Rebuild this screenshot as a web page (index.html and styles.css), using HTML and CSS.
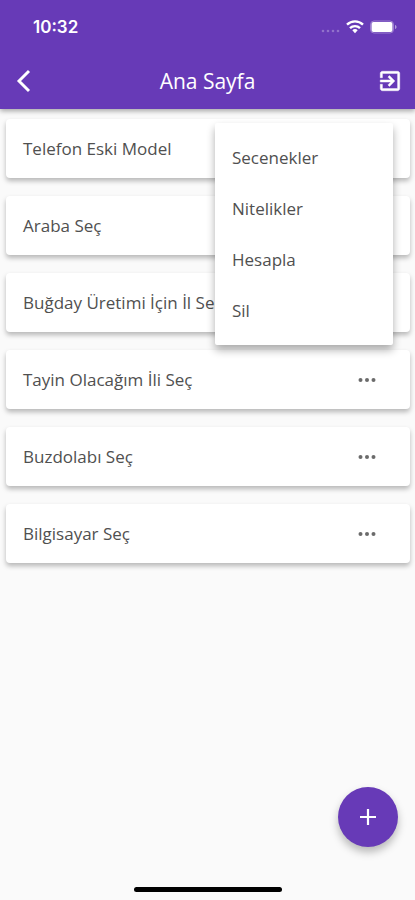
FILE: index.html
```html
<!DOCTYPE html>
<html lang="tr">
<head>
<meta charset="utf-8">
<meta name="viewport" content="width=device-width, initial-scale=1">
<title>Ana Sayfa</title>
<link rel="stylesheet" href="styles.css">
</head>
<body>
<header class="header">
  <div class="status">
    <time class="clock">10:32</time>
    <div class="indicators">
      <svg class="signal" width="20" height="16" viewBox="0 0 20 16" aria-hidden="true"><g fill="#fff" opacity=".28"><circle cx="3" cy="12" r="1.300"/><circle cx="8" cy="12" r="1.300"/><circle cx="13" cy="12" r="1.300"/><circle cx="18" cy="12" r="1.300"/></g></svg>
      <svg width="18" height="16" viewBox="0 0 18 16" aria-hidden="true"><g fill="none" stroke="#fff" stroke-width="2.4"><path d="M1 5.6a11.5 11.5 0 0 1 16 0"/><path d="M4 9.1a7.2 7.2 0 0 1 10 0"/></g><path d="M6.3 11.3a4 4 0 0 1 5.4 0L9 14.2z" fill="#fff"/></svg>
      <svg width="27" height="16" viewBox="0 0 27 16" aria-hidden="true"><rect x=".5" y="2" width="23" height="12" rx="3.5" fill="none" stroke="#fff" opacity=".35"/><rect x="1.500" y="3" width="21" height="10" rx="2" fill="#fff"/><path d="M25 6v4c2-.6 2-3.400 0-4z" fill="#fff" opacity=".5"/></svg>
    </div>
  </div>
  <div class="toolbar">
    <button class="tool" type="button" aria-label="Geri"><svg width="24" height="24" viewBox="0 0 24 24" aria-hidden="true"><path d="M16 2 6 12l10 10" fill="none" stroke="#fff" stroke-width="2.900"/></svg></button>
    <h1 class="title">Ana Sayfa</h1>
    <button class="tool" type="button" aria-label="Çıkış"><svg width="26" height="26" viewBox="0 0 24 24" fill="#fff" stroke="#fff" stroke-width=".4" aria-hidden="true"><path d="M10.090 15.590 11.500 17l5-5-5-5-1.410 1.410L12.670 11H3v2h9.670l-2.580 2.590zM19 3H5c-1.110 0-2 .9-2 2v4h2V5h14v14H5v-4H3v4c0 1.100.89 2 2 2h14c1.100 0 2-.9 2-2V5c0-1.100-.9-2-2-2z"/></svg></button>
  </div>
</header>
<main>
  <ul class="list">
    <li class="card">
      <span class="name">Telefon Eski Model</span>
      <div class="menu" role="menu">
        <button class="item" type="button" role="menuitem">Secenekler</button>
        <button class="item" type="button" role="menuitem">Nitelikler</button>
        <button class="item" type="button" role="menuitem">Hesapla</button>
        <button class="item" type="button" role="menuitem">Sil</button>
      </div>
    </li>
    <li class="card"><span class="name">Araba Seç</span></li>
    <li class="card"><span class="name">Buğday Üretimi İçin İl Seç</span></li>
    <li class="card"><span class="name">Tayin Olacağım İli Seç</span><button class="more" type="button" aria-label="Seçenekler"><svg width="18" height="6" viewBox="0 0 18 6" fill="#6b6b6b" aria-hidden="true"><circle cx="2.500" cy="3" r="2"/><circle cx="9" cy="3" r="2"/><circle cx="15.500" cy="3" r="2"/></svg></button></li>
    <li class="card"><span class="name">Buzdolabı Seç</span><button class="more" type="button" aria-label="Seçenekler"><svg width="18" height="6" viewBox="0 0 18 6" fill="#6b6b6b" aria-hidden="true"><circle cx="2.500" cy="3" r="2"/><circle cx="9" cy="3" r="2"/><circle cx="15.500" cy="3" r="2"/></svg></button></li>
    <li class="card"><span class="name">Bilgisayar Seç</span><button class="more" type="button" aria-label="Seçenekler"><svg width="18" height="6" viewBox="0 0 18 6" fill="#6b6b6b" aria-hidden="true"><circle cx="2.500" cy="3" r="2"/><circle cx="9" cy="3" r="2"/><circle cx="15.500" cy="3" r="2"/></svg></button></li>
  </ul>
</main>
<button class="fab" type="button" aria-label="Ekle"><svg width="16" height="16" viewBox="0 0 16 16" aria-hidden="true"><path d="M8 0v16M0 8h16" stroke="#fff" stroke-width="2.200"/></svg></button>
<div class="home"></div>
</body>
</html>
```
FILE: styles.css
```css
* {
  box-sizing: border-box;
}

body {
  margin: 0;
  min-height: 100vh;
  background: #fafafa;
  color: #505050;
  font-family: "Open Sans", "Noto Sans", sans-serif;
  font-size: 17px;
  font-weight: 400;
}

button {
  padding: 0;
  border: 0;
  background: none;
  color: inherit;
  font: inherit;
}

svg {
  display: block;
}

.header {
  position: relative;
  background: #673ab7;
  color: #fff;
  box-shadow: 0 2px 5px rgba(0, 0, 0, 0.35);
}

.status {
  display: flex;
  align-items: center;
  justify-content: space-between;
  height: 52px;
  padding: 2px 18px 0 33px;
}

.clock {
  font-family: Inter, sans-serif;
  font-size: 17px;
  font-weight: 600;
}

.indicators {
  display: flex;
  align-items: center;
  gap: 6px;
}

.toolbar {
  display: flex;
  align-items: center;
  justify-content: space-between;
  height: 57px;
}

.tool {
  display: grid;
  place-items: center;
  width: 50px;
  height: 50px;
}

.title {
  margin: 0;
  font-size: 21px;
  font-weight: 400;
}

.list {
  display: flex;
  flex-direction: column;
  gap: 18px;
  margin: 0;
  padding: 10px 5px 0 6px;
  list-style: none;
}

.card {
  position: relative;
  display: flex;
  align-items: center;
  justify-content: space-between;
  height: 59px;
  padding: 0 17px;
  border-radius: 4px;
  background: #fff;
  box-shadow: 0 3px 5px rgba(0, 0, 0, 0.27);
}

.more {
  display: grid;
  place-items: center;
  width: 52px;
  height: 52px;
}

.menu {
  position: absolute;
  z-index: 1;
  top: 4px;
  right: 17px;
  width: 178px;
  padding: 9px 0;
  border-radius: 2px;
  background: #fff;
  box-shadow: 0 5px 9px rgba(0, 0, 0, 0.32);
}

.item {
  display: block;
  width: 100%;
  height: 51px;
  padding: 0 17px;
  text-align: left;
}

.fab {
  position: fixed;
  right: 17px;
  bottom: 53px;
  display: grid;
  place-items: center;
  width: 60px;
  height: 60px;
  border-radius: 50%;
  background: #673ab7;
  box-shadow: 0 5px 9px rgba(0, 0, 0, 0.27);
}

.home {
  position: fixed;
  bottom: 8px;
  left: 50%;
  width: 148px;
  height: 5px;
  border-radius: 3px;
  background: #000;
  transform: translateX(-50%);
}
```
